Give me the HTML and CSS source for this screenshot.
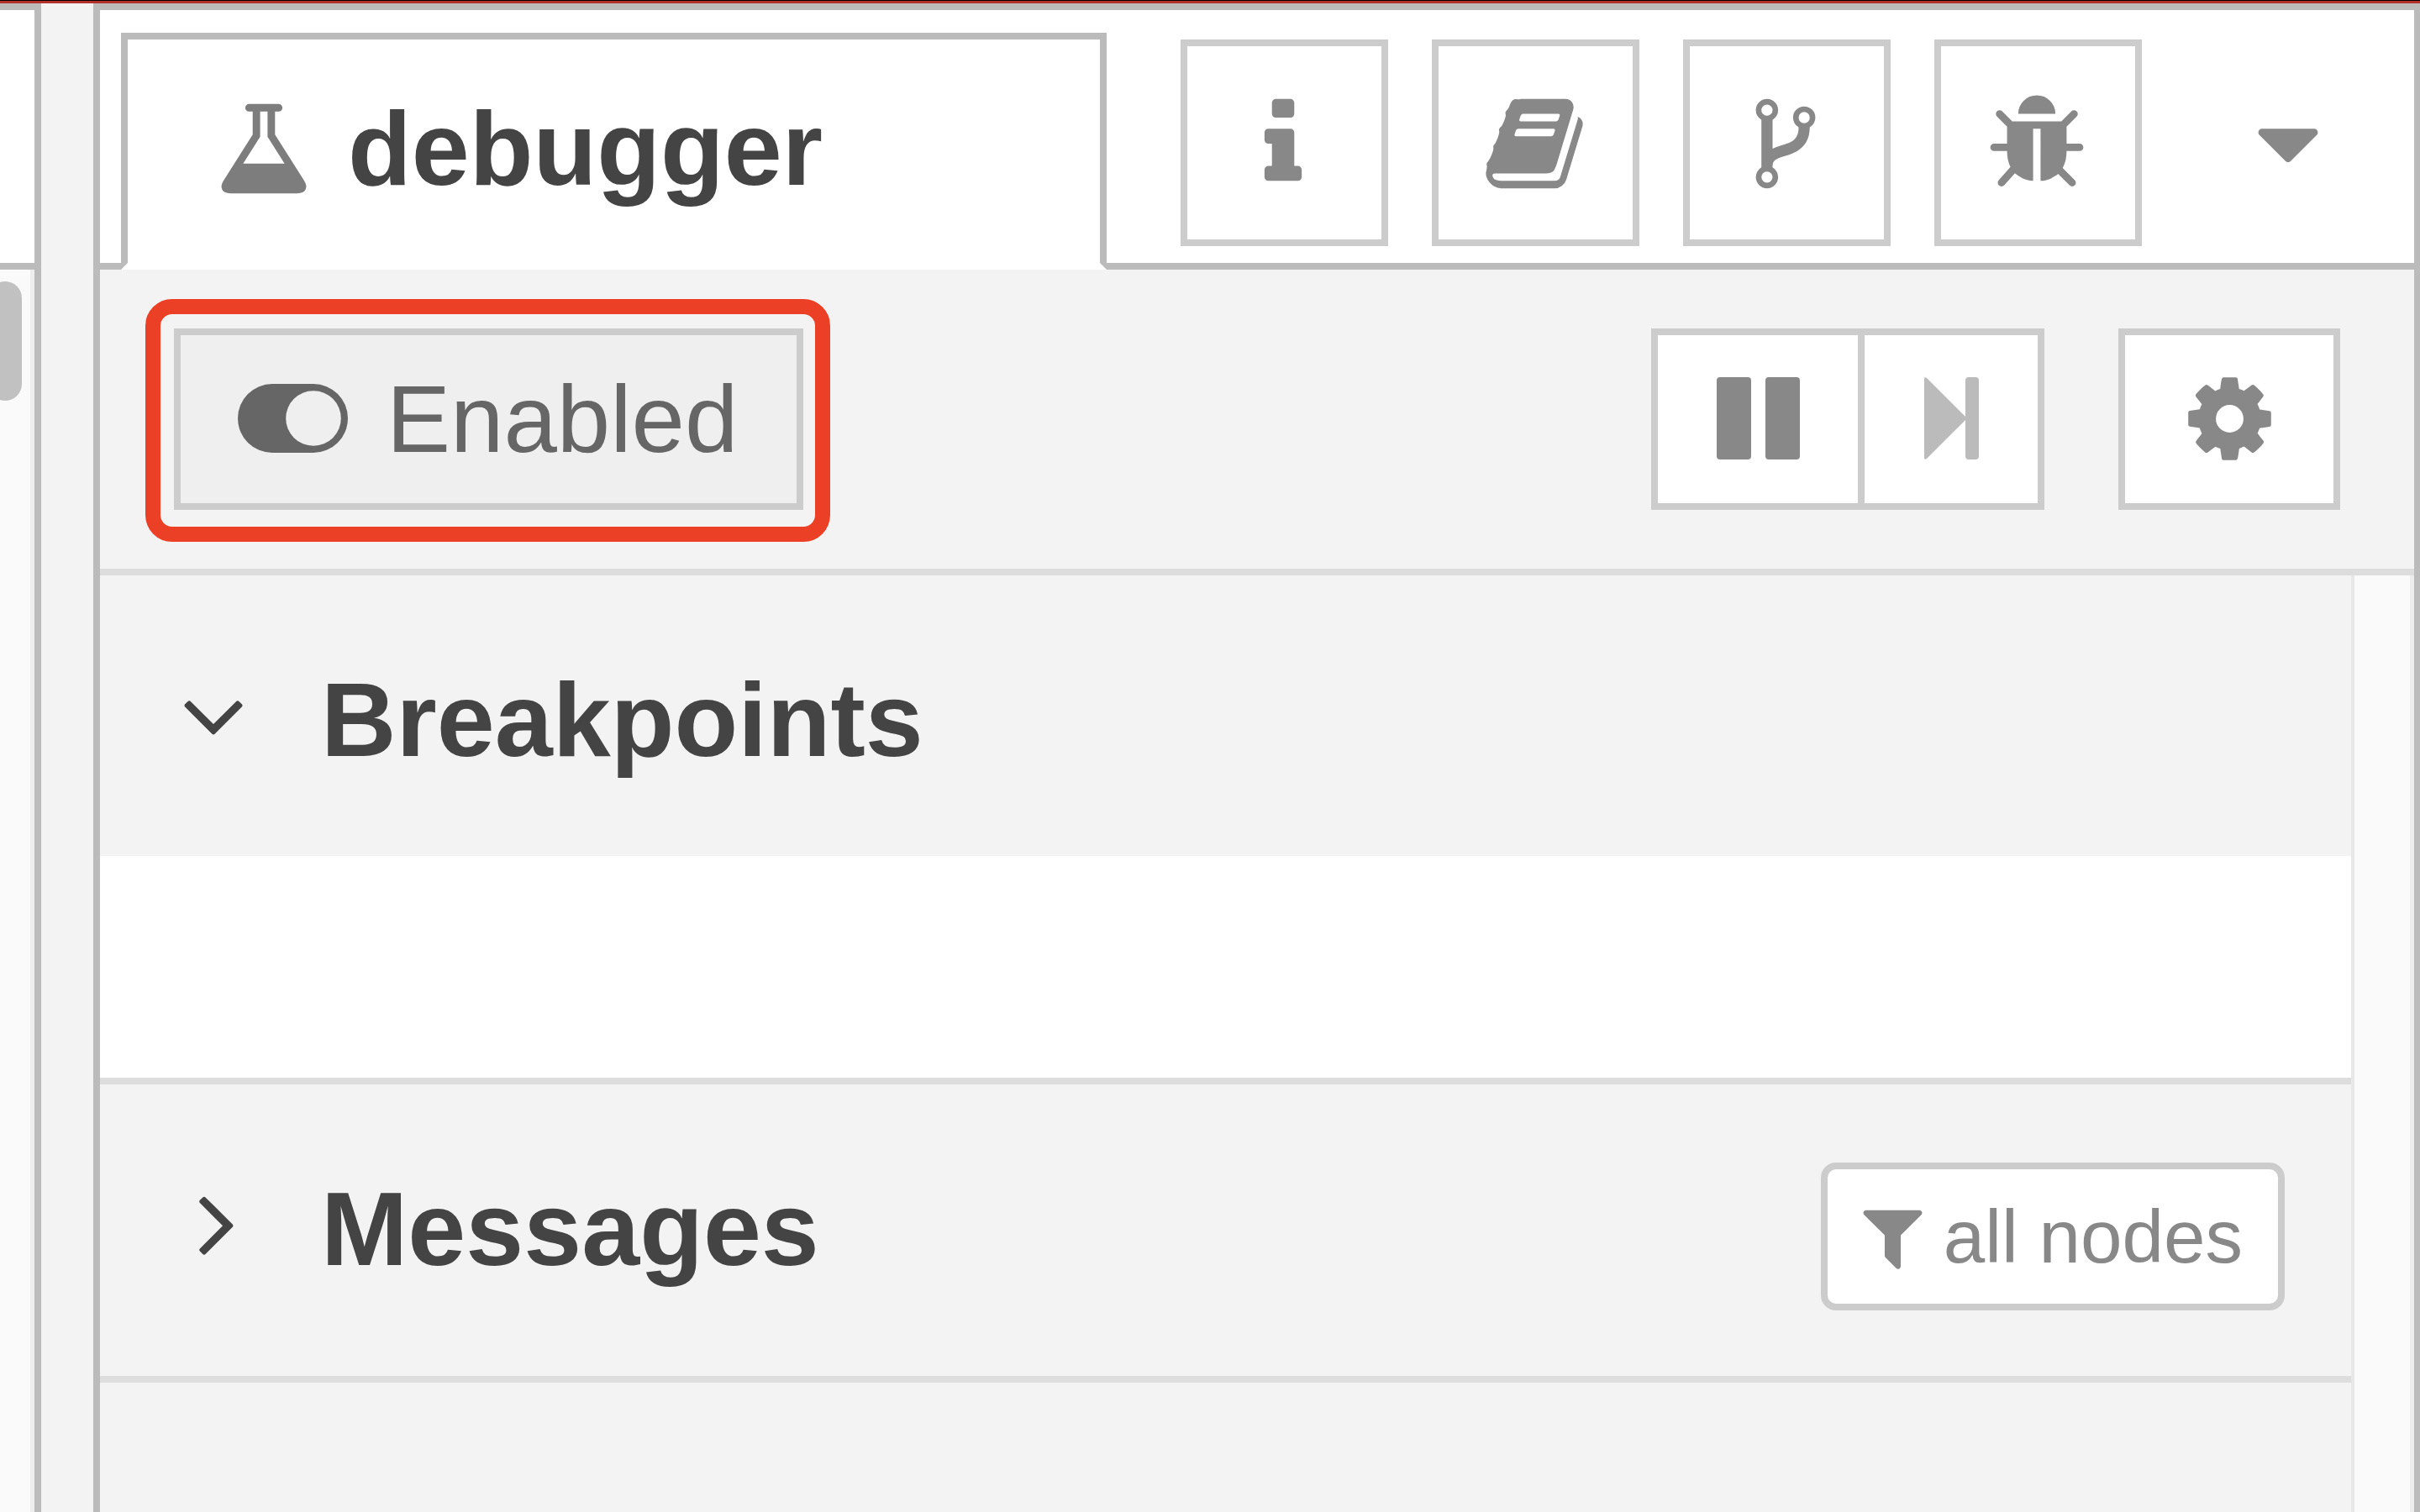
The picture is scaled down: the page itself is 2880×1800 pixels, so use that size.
FILE: index.html
```html
<!DOCTYPE html>
<html lang="en">
<head>
<meta charset="utf-8">
<title>debugger</title>
<link rel="stylesheet" href="styles.css">
</head>
<body>
<div class="app-header"></div>
<div class="app">
  <div class="workspace">
    <div class="workspace-tabs"></div>
    <div class="workspace-scroll"><div class="workspace-thumb"></div></div>
  </div>
  <div class="separator"></div>
  <aside class="sidebar">
    <nav class="tabs">
      <button type="button" class="tab">
        <svg class="icon-lg icon-flask" viewBox="0 0 1792 1792" aria-hidden="true"><path d="M1591 1448q56 89 21.5 152.5t-140.500 63.500h-1152q-106 0-140.500-63.500t21.500-152.500l503-793v-399h-64q-26 0-45-19t-19-45 19-45 45-19h512q26 0 45 19t19 45-19 45-45 19h-64v399zm-779-725l-272 429h712l-272-429-20-31v-436h-128v436z"/></svg>
        <span>debugger</span>
      </button>
      <div class="tab-buttons">
        <button type="button" class="tab-button" aria-label="Information">
          <svg class="icon-lg" viewBox="0 0 1792 1792" aria-hidden="true"><path d="M1216 1344v128q0 26-19 45t-45 19h-512q-26 0-45-19t-19-45v-128q0-26 19-45t45-19h64v-384h-64q-26 0-45-19t-19-45v-128q0-26 19-45t45-19h384q26 0 45 19t19 45v576h64q26 0 45 19t19 45zm-128-1152v192q0 26-19 45t-45 19h-256q-26 0-45-19t-19-45v-192q0-26 19-45t45-19h256q26 0 45 19t19 45z"/></svg>
        </button>
        <button type="button" class="tab-button" aria-label="Help">
          <svg class="icon-lg" viewBox="0 0 1792 1792" aria-hidden="true"><path d="M1703 478q40 57 18 129l-275 906q-19 64-76.5 107.5t-122.500 43.500h-923q-77 0-148.500-53.500t-99.500-131.500q-24-67-2-127 0-4 3-27t4-37q1-8-3-21.500t-3-19.500q2-11 8-21t16.500-23.500 16.500-23.500q23-38 45-91.500t30-91.500q3-10 .5-30t-.5-28q3-11 17-28t17-23q21-36 42-92t25-90q1-9-2.500-32t.5-28q4-13 22-30.500t22-22.500q19-26 42.500-84.500t27.500-96.500q1-8-3-25.500t-2-26.500q2-8 9-18t18-23 17-21q8-12 16.500-30.500t15-35 16-36 19.500-32 26.500-23.500 36-11.500 47.500 5.500l-1 3q38-9 51-9h761q74 0 114 56t18 130l-274 906q-36 119-71.500 153.500t-128.500 34.500h-869q-27 0-38 15-11 16-1 43 24 70 144 70h923q29 0 56-15.500t35-41.500l300-987q7-22 5-57 38 15 59 43zm-1064 2q-4 13 2 22.500t20 9.500h608q13 0 25.500-9.500t16.500-22.500l21-64q4-13-2-22.500t-20-9.500h-608q-13 0-25.500 9.500t-16.500 22.500zm-83 256q-4 13 2 22.500t20 9.500h608q13 0 25.500-9.500t16.500-22.500l21-64q4-13-2-22.500t-20-9.500h-608q-13 0-25.500 9.500t-16.500 22.500z"/></svg>
        </button>
        <button type="button" class="tab-button" aria-label="History">
          <svg class="icon-lg" viewBox="0 0 1792 1792" aria-hidden="true"><path d="M672 1472q0-40-28-68t-68-28-68 28-28 68 28 68 68 28 68-28 28-68zm0-1152q0-40-28-68t-68-28-68 28-28 68 28 68 68 28 68-28 28-68zm640 128q0-40-28-68t-68-28-68 28-28 68 28 68 68 28 68-28 28-68zm96 0q0 52-26 96.500t-70 69.500q-2 287-226 414-67 38-203 81-128 40-169.500 71t-41.500 100v26q44 25 70 69.500t26 96.500q0 80-56 136t-136 56-136-56-56-136q0-52 26-96.500t70-69.500v-820q-44-25-70-69.500t-26-96.500q0-80 56-136t136-56 136 56 56 136q0 52-26 96.500t-70 69.500v497q54-26 154-57 55-17 87.500-29.500t70.500-31 59-39.500 40.500-51 28-69.500 8.500-91.500q-44-25-70-69.500t-26-96.500q0-80 56-136t136-56 136 56 56 136z"/></svg>
        </button>
        <button type="button" class="tab-button" aria-label="Debug messages">
          <svg class="icon-lg" viewBox="0 0 1792 1792" aria-hidden="true"><path d="M1696 960q0 26-19 45t-45 19h-224q0 171-67 290l208 209q19 19 19 45t-19 45q-18 19-45 19t-45-19l-198-197q-5 5-15 13t-42 28.500-65 36.500-82 29-97 13v-896h-128v896q-51 0-101.500-13.500t-87-33-66-39-43.500-32.500l-15-14-183 207q-20 21-48 21-24 0-43-16-19-18-20.500-44.500t15.500-46.500l202-227q-58-114-58-274h-224q-26 0-45-19t-19-45 19-45 45-19h224v-294l-173-173q-19-19-19-45t19-45 45-19 45 19l173 173h844l173-173q19-19 45-19t45 19 19 45-19 45l-173 173v294h224q26 0 45 19t19 45zm-480-576h-640q0-133 93.500-226.500t226.500-93.500 226.500 93.500 93.500 226.500z"/></svg>
        </button>
        <button type="button" class="tab-button tab-button-plain" aria-label="More tabs">
          <svg class="icon-lg" viewBox="0 0 1792 1792" aria-hidden="true"><path d="M1408 704q0 26-19 45l-448 448q-19 19-45 19t-45-19l-448-448q-19-19-19-45t19-45 45-19h896q26 0 45 19t19 45z"/></svg>
        </button>
      </div>
    </nav>

    <div class="toolbar">
      <div class="highlight">
        <button type="button" class="tool toggle" aria-pressed="true">
          <svg class="icon-toggle" viewBox="0 0 131 82" aria-hidden="true"><path fill-rule="evenodd" d="M41 0H90A41 41 0 0 1 90 82H41A41 41 0 0 1 41 0ZM90 8.200A32.800 32.800 0 1 0 90 73.800A32.800 32.800 0 1 0 90 8.200Z"/></svg>
          <span>Enabled</span>
        </button>
      </div>
      <div class="tools">
        <div class="tool-group">
          <button type="button" class="tool tool-pause" aria-label="Pause">
            <svg class="icon-pause" viewBox="0 0 99 98" aria-hidden="true"><rect width="41" height="98" rx="4"/><rect x="58" width="41" height="98" rx="4"/></svg>
          </button>
          <button type="button" class="tool tool-step" aria-label="Step" disabled>
            <svg class="icon-step" viewBox="0 0 65 98" aria-hidden="true"><path d="M0 2Q0-1 3 1L49 47V4Q49 0 53 0H61Q65 0 65 4V94Q65 98 61 98H53Q49 98 49 94V51L3 97Q0 99 0 96Z"/></svg>
          </button>
        </div>
        <button type="button" class="tool tool-settings" aria-label="Settings">
          <svg class="icon-md" viewBox="0 0 1792 1792" aria-hidden="true"><path d="M1152 896q0-106-75-181t-181-75-181 75-75 181 75 181 181 75 181-75 75-181zm512-109v222q0 12-8 23t-20 13l-185 28q-19 54-39 91 35 50 107 138 10 12 10 25t-9 23q-27 37-99 108t-94 71q-12 0-26-9l-138-108q-44 23-91 38-16 136-29 186-7 28-36 28h-222q-14 0-24.500-8.500t-11.500-21.500l-28-184q-49-16-90-37l-141 107q-10 9-25 9-14 0-25-11-126-114-165-168-7-10-7-23 0-12 8-23 15-21 51-66.500t54-70.500q-27-50-41-99l-183-27q-13-2-21-12.500t-8-23.500v-222q0-12 8-23t19-13l186-28q14-46 39-92-40-57-107-138-10-12-10-24 0-10 9-23 26-36 98.500-107.500t94.500-71.500q13 0 26 10l138 107q44-23 91-38 16-136 29-186 7-28 36-28h222q14 0 24.500 8.500t11.500 21.500l28 184q49 16 90 37l142-107q9-9 24-9 13 0 25 10 129 119 165 170 7 8 7 22 0 12-8 23-15 21-51 66.500t-54 70.500q26 50 41 98l183 28q13 2 21 12.500t8 23.500z"/></svg>
        </button>
      </div>
    </div>

    <div class="panel">
      <div class="sections">
        <section>
          <header class="section-header">
            <button type="button" class="section-toggle" aria-expanded="true">
              <svg class="icon-lg" viewBox="0 0 1792 1792" aria-hidden="true"><path d="M1395 736q0 13-10 23l-466 466q-10 10-23 10t-23-10l-466-466q-10-10-10-23t10-23l50-50q10-10 23-10t23 10l393 393 393-393q10-10 23-10t23 10l50 50q10 10 10 23z"/></svg>
              <span>Breakpoints</span>
            </button>
          </header>
          <div class="section-body"></div>
        </section>
        <section>
          <header class="section-header section-header-last">
            <button type="button" class="section-toggle" aria-expanded="false">
              <svg class="icon-lg" viewBox="-64 32 1792 1792" aria-hidden="true"><path d="M1171 960q0 13-10 23l-466 466q-10 10-23 10t-23-10l-50-50q-10-10-10-23t10-23l393-393-393-393q-10-10-10-23t10-23l50-50q10-10 23-10t23 10l466 466q10 10 10 23z"/></svg>
              <span>Messages</span>
            </button>
            <button type="button" class="filter">
              <svg class="icon-sm" viewBox="0 0 1792 1792" aria-hidden="true"><path d="M1595 295q17 41-14 70l-493 493v742q0 42-39 59-13 5-25 5-27 0-45-19l-256-256q-19-19-19-45v-486l-493-493q-31-29-14-70 17-39 59-39h1280q42 0 59 39z"/></svg>
              <span>all nodes</span>
            </button>
          </header>
        </section>
      </div>
      <div class="scroll-track"></div>
    </div>
  </aside>
</div>
</body>
</html>
```
FILE: styles.css
```css
* {
  box-sizing: border-box;
}

body {
  margin: 0;
  min-height: 100vh;
  display: flex;
  flex-direction: column;
  background: #f3f3f3;
  color: #444;
  font-family: "Liberation Sans", Arial, sans-serif;
}

button {
  margin: 0;
  padding: 0;
  border: 0;
  border-radius: 0;
  background: none;
  color: inherit;
  font: inherit;
  text-align: left;
}

svg {
  display: block;
  flex: none;
  fill: currentColor;
}

.app-header {
  height: 4px;
  background: #b3302b;
  border-top: 1px solid #000;
}

.app {
  flex: 1;
  display: flex;
}

/* Edge of the editor, left of the sidebar */
.workspace {
  width: 49px;
  display: flex;
  flex-direction: column;
  border-top: 8px solid #bbb;
  border-right: 8px solid #bbb;
  overflow: hidden;
}

.workspace-tabs {
  height: 309px;
  background: #fff;
  border-bottom: 8px solid #bbb;
}

.workspace-scroll {
  flex: 1;
  padding-top: 14px;
  background: #fafafa;
  border-right: 5px solid #ededed;
}

.workspace-thumb {
  width: 40px;
  height: 142px;
  margin-left: -14px;
  border-radius: 20px;
  background: #c1c1c1;
}

.separator {
  width: 62px;
}

/* Sidebar */
.sidebar {
  flex: 1;
  display: flex;
  flex-direction: column;
  border: 8px solid #bbb;
  border-right-width: 7px;
  border-bottom: 0;
}

.icon-lg {
  width: 124px;
  height: 124px;
}

.icon-md {
  width: 115px;
  height: 115px;
}

.icon-sm {
  width: 89px;
  height: 89px;
}

.tabs {
  display: flex;
  align-items: flex-start;
  gap: 88px;
  height: 309px;
  padding: 27px 25px 0;
  background: #fff;
  border-bottom: 8px solid #bbb;
}

.tab {
  flex: 1;
  display: flex;
  align-items: center;
  gap: 38px;
  height: 282px;
  padding: 0 0 6px 100px;
  background: #fff;
  border: 8px solid #bbb;
  border-bottom-color: #fff;
  font-size: 124px;
  font-weight: bold;
}

.icon-flask {
  color: #7d7d7d;
}

.tab-buttons {
  display: flex;
  gap: 52px;
  padding-top: 8px;
}

.tab-button {
  display: flex;
  align-items: center;
  justify-content: center;
  width: 247px;
  height: 246px;
  padding: 2px 3px 0 0;
  border: 8px solid #ccc;
  color: #888;
}

.tab-button-plain {
  border-color: transparent;
}

/* Debugger controls */
.toolbar {
  display: flex;
  justify-content: space-between;
  padding: 70px 88px;
  border-bottom: 8px solid #ddd;
}

.tool {
  display: flex;
  align-items: center;
  justify-content: center;
  height: 216px;
  padding-bottom: 2px;
  background: #fff;
  border: 8px solid #ccc;
  color: #888;
}

.highlight {
  position: relative;
}

.highlight::after {
  content: "";
  position: absolute;
  inset: -35px -32px -38px -34px;
  border: 18px solid #eb4026;
  border-radius: 32px;
  pointer-events: none;
}

.toggle {
  gap: 46px;
  padding: 0 70px 2px 68px;
  background: #efefef;
  color: #666;
  font-size: 114px;
}

.icon-toggle {
  width: 131px;
  height: 82px;
}

.tools {
  display: flex;
  gap: 88px;
}

.tool-group {
  display: flex;
}

.tool-pause {
  width: 254px;
}

.tool-step {
  width: 214px;
  border-left: 0;
  color: #bbb;
}

.tool-settings {
  width: 264px;
}

.icon-pause {
  width: 99px;
  height: 98px;
}

.icon-step {
  width: 65px;
  height: 98px;
}

/* Collapsible sections */
.panel {
  flex: 1;
  display: flex;
}

.sections {
  flex: 1;
}

.scroll-track {
  width: 75px;
  background: #fafafa;
  border-left: 4px solid #e8e8e8;
  border-right: 5px solid #ededed;
}

.section-header {
  display: flex;
  align-items: flex-start;
}

.section-header-last {
  border-bottom: 8px solid #ddd;
}

.section-toggle {
  flex: 1;
  display: flex;
  align-items: flex-start;
  gap: 66px;
  padding: 104px 0 94px 73px;
  font-size: 124px;
  font-weight: bold;
  line-height: 136px;
}

.section-body {
  height: 272px;
  background: #fff;
  border-bottom: 8px solid #ddd;
}

.filter {
  display: flex;
  align-items: center;
  gap: 16px;
  height: 176px;
  margin: 93px 79px 78px 0;
  padding: 0 42px 0 33px;
  background: #fff;
  border: 8px solid #ccc;
  border-radius: 18px;
  color: #888;
  font-size: 89px;
}
```
